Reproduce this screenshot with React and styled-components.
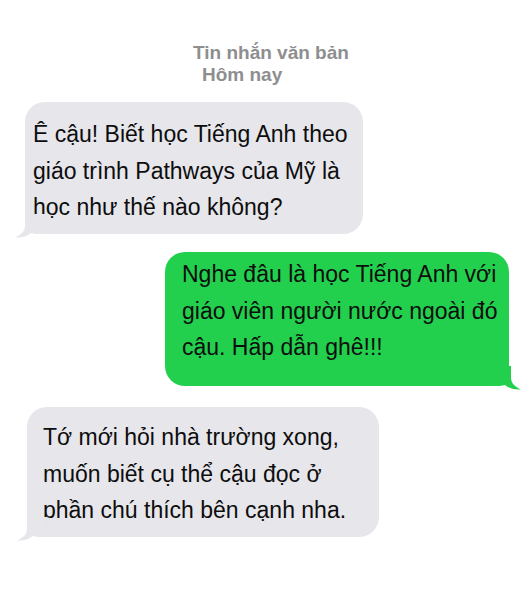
import React from "react"
import styled, { createGlobalStyle } from "styled-components"

const GlobalStyle = createGlobalStyle`
  html, body {
    margin: 0;
    padding: 0;
    background: #fff;
  }
  body {
    font-family: "Liberation Sans", Arial, sans-serif;
  }
`

const Screen = styled.div`
  width: 523px;
  height: 600px;
  background: #fff;
  overflow: hidden;
  padding-top: 42px;
  box-sizing: border-box;
`

const Header = styled.div`
  display: flex;
  flex-direction: column;
  font-size: 19px;
  line-height: 22px;
  font-weight: bold;
  color: #8e8e90;
  margin-bottom: 16px;
`

const HeaderLine = styled.span`
  margin-left: ${p => p.$left}px;
  white-space: nowrap;
`

const Row = styled.div`
  display: flex;
  padding-left: ${p => p.$left}px;
  margin-bottom: ${p => p.$gap}px;
`

const Bubble = styled.div`
  position: relative;
  width: ${p => p.$width}px;
  height: ${p => p.$height}px;
  box-sizing: border-box;
  padding: ${p => p.$pad};
  border-radius: 20px;
  background: ${p => (p.$mine ? "#22d04d" : "#e6e6eb")};
  color: #0d0d0d;
  font-size: 23px;
  line-height: 36.5px;
`

const Line = styled.span`
  display: block;
  white-space: nowrap;
`

const TailSvg = styled.svg`
  position: absolute;
  bottom: -4px;
  ${p => (p.$mine ? "right: -12px; transform: scaleX(-1);" : "left: -10px;")}
  width: 30px;
  height: 24px;
`

const Tail = ({ mine, color }) => (
  <TailSvg $mine={mine} viewBox="0 0 30 24">
    <path
      d="M10 0 L10 12 C10 17 6 21 0 23.5 C6 24 12 22.5 16 19 C19 20 23 20 26 20 L30 20 L30 0 Z"
      fill={color}
    />
  </TailSvg>
)

const messages = [
  {
    mine: false,
    left: 25,
    width: 338,
    height: 132,
    pad: "14px 0 0 8px",
    gap: 18,
    lines: [
      "Ê cậu! Biết học Tiếng Anh theo",
      "giáo trình Pathways của Mỹ là",
      "học như thế nào không?",
    ],
  },
  {
    mine: true,
    left: 165,
    width: 344,
    height: 134,
    pad: "4px 0 0 17px",
    gap: 21,
    lines: [
      "Nghe đâu là học Tiếng Anh với",
      "giáo viên người nước ngoài đó",
      "cậu. Hấp dẫn ghê!!!",
    ],
  },
  {
    mine: false,
    left: 27,
    width: 352,
    height: 130,
    pad: "12px 0 0 16px",
    gap: 0,
    lines: [
      "Tớ mới hỏi nhà trường xong,",
      "muốn biết cụ thể cậu đọc ở",
      "phần chú thích bên cạnh nha.",
    ],
  },
]

export default function App() {
  return (
    <>
      <GlobalStyle />
      <Screen>
        <Header>
          <HeaderLine $left={193}>Tin nhắn văn bản</HeaderLine>
          <HeaderLine $left={202}>Hôm nay</HeaderLine>
        </Header>
        {messages.map((m, i) => (
          <Row key={i} $left={m.left} $gap={m.gap}>
            <Bubble $mine={m.mine} $width={m.width} $height={m.height} $pad={m.pad}>
              {m.lines.map(l => (
                <Line key={l}>{l}</Line>
              ))}
              <Tail mine={m.mine} color={m.mine ? "#22d04d" : "#e6e6eb"} />
            </Bubble>
          </Row>
        ))}
      </Screen>
    </>
  )
}
